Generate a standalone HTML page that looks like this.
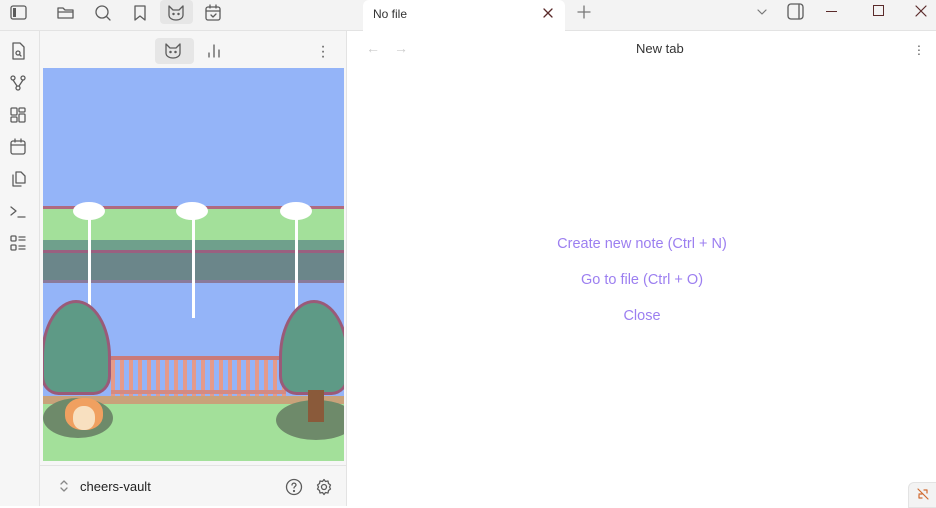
<!DOCTYPE html>
<html><head><style>
*{margin:0;padding:0;box-sizing:border-box}
body{width:936px;height:506px;overflow:hidden;font-family:"Liberation Sans",sans-serif;background:#fff;position:relative}
.a{position:absolute}
svg{position:absolute;fill:none;stroke:#5c5c5c;stroke-width:1.3;stroke-linecap:round;stroke-linejoin:round}
</style></head><body>
<div class="a" style="left:0;top:0;width:936px;height:31px;background:#f3f3f3;border-bottom:1px solid #e3e3e3"></div>
<div class="a" style="left:0;top:31px;width:40px;height:475px;background:#f6f6f6;border-right:1px solid #e3e3e3"></div>
<div class="a" style="left:40px;top:31px;width:307px;height:475px;background:#f6f6f6;border-right:1px solid #e3e3e3"></div>
<div class="a" style="left:40px;top:465px;width:307px;height:1px;background:#e3e3e3"></div>
<!-- top icons -->
<svg style="left:9px;top:3px" width="20" height="20" viewBox="0 0 20 20"><rect x="2" y="3" width="15" height="13" rx="2"/><rect x="4" y="5" width="3" height="9" fill="#5c5c5c" stroke="none"/></svg>
<svg style="left:56px;top:3px" width="20" height="20" viewBox="0 0 20 20"><path d="M2 5v10h15V7H9L7 5z M2 9h15"/></svg>
<svg style="left:93px;top:3px" width="20" height="20" viewBox="0 0 20 20"><circle cx="9" cy="9" r="6"/><path d="M13.5 13.5L17 17"/></svg>
<svg style="left:130px;top:3px" width="20" height="20" viewBox="0 0 20 20"><path d="M5 3h10v14l-5-4-5 4z"/></svg>
<div class="a" style="left:160px;top:0;width:33px;height:24px;background:#e6e6e6;border-radius:4px"></div>
<svg style="left:166px;top:3px" width="20" height="20" viewBox="0 0 20 20"><path d="M3 3l4 4h6l4-4v9c0 3-3 5-7 5s-7-2-7-5z"/><circle cx="7.5" cy="11" r=".6" fill="#5c5c5c"/><circle cx="12.5" cy="11" r=".6" fill="#5c5c5c"/></svg>
<svg style="left:203px;top:3px" width="20" height="20" viewBox="0 0 20 20"><rect x="3" y="4" width="14" height="13" rx="2"/><path d="M3 8h14M7 2v3M13 2v3M8 12l2 2 3-3"/></svg>
<!-- ribbon -->
<svg style="left:8px;top:41px" width="20" height="20" viewBox="0 0 20 20"><path d="M5 2h7l4 4v12H5z"/><circle cx="10" cy="12" r="2"/><path d="M11.5 13.5l1.5 1.5"/></svg>
<svg style="left:8px;top:73px" width="20" height="20" viewBox="0 0 20 20"><circle cx="5" cy="5" r="2"/><circle cx="15" cy="5" r="2"/><circle cx="10" cy="15" r="2"/><path d="M5 7l4 6M15 7l-4 6"/></svg>
<svg style="left:8px;top:105px" width="20" height="20" viewBox="0 0 20 20"><rect x="3" y="3" width="6" height="7" rx="1"/><rect x="11" y="3" width="6" height="4" rx="1"/><rect x="3" y="12" width="6" height="5" rx="1"/><rect x="11" y="9" width="6" height="8" rx="1"/></svg>
<svg style="left:8px;top:137px" width="20" height="20" viewBox="0 0 20 20"><rect x="3" y="4" width="14" height="13" rx="2"/><path d="M3 8h14M7 2v3M13 2v3"/></svg>
<svg style="left:8px;top:169px" width="20" height="20" viewBox="0 0 20 20"><path d="M8 3h5l4 4v7H8z M5 6v11h8"/></svg>
<svg style="left:8px;top:201px" width="20" height="20" viewBox="0 0 20 20"><path d="M3 6l5 4-5 4M10 16h7"/></svg>
<svg style="left:8px;top:233px" width="20" height="20" viewBox="0 0 20 20"><rect x="3" y="3" width="5" height="5" rx="1"/><rect x="3" y="12" width="5" height="5" rx="1"/><path d="M11 4h6M11 7h6M11 13h6M11 16h6"/></svg>
<!-- panel header -->
<div class="a" style="left:155px;top:38px;width:39px;height:26px;background:#e6e6e6;border-radius:4px"></div>
<svg style="left:163px;top:41px" width="20" height="20" viewBox="0 0 20 20"><path d="M3 3l4 4h6l4-4v9c0 3-3 5-7 5s-7-2-7-5z"/><circle cx="7.5" cy="11" r=".6" fill="#5c5c5c"/><circle cx="12.5" cy="11" r=".6" fill="#5c5c5c"/></svg>
<svg style="left:204px;top:41px" width="20" height="20" viewBox="0 0 20 20"><path d="M5 12v4M10 4v12M15 9v7"/></svg>
<div class="a" style="left:320px;top:44px;color:#5c5c5c;font-size:16px;line-height:5px;width:6px;text-align:center">·<br>·<br>·</div>
<!-- scene -->
<div class="a" style="left:43px;top:68px;width:301px;height:393px;background:#94b4f8;overflow:hidden">
 <div class="a" style="left:0;top:138px;width:301px;height:40px;background:#a3e09a;border-top:3px solid #b06a80"></div>
 <div class="a" style="left:0;top:172px;width:301px;height:12px;background:#6fa08c"></div>
 <div class="a" style="left:0;top:182px;width:301px;height:33px;background:#6b868a;border-top:3px solid #9a6080;border-bottom:3px solid #8a7a9a"></div>
 <div class="a" style="left:30px;top:134px;width:32px;height:18px;background:#fff;border-radius:50%"></div>
 <div class="a" style="left:45px;top:145px;width:3px;height:140px;background:#fff"></div>
 <div class="a" style="left:133px;top:134px;width:32px;height:18px;background:#fff;border-radius:50%"></div>
 <div class="a" style="left:149px;top:145px;width:3px;height:105px;background:#fff"></div>
 <div class="a" style="left:237px;top:134px;width:32px;height:18px;background:#fff;border-radius:50%"></div>
 <div class="a" style="left:252px;top:145px;width:3px;height:128px;background:#fff"></div>
 <div class="a" style="left:68px;top:288px;width:175px;height:4px;background:#c97a7a"></div>
 <div class="a" style="left:68px;top:292px;width:175px;height:40px;background:repeating-linear-gradient(90deg,#e59a8a 0 4px,#94b4f8 4px 9px)"></div>
 <div class="a" style="left:68px;top:322px;width:175px;height:4px;background:#d48a82"></div>
 <div class="a" style="left:0;top:328px;width:301px;height:10px;background:#c9a27a"></div>
 <div class="a" style="left:0;top:336px;width:301px;height:57px;background:#a3e09a"></div>
 <div class="a" style="left:0;top:330px;width:70px;height:40px;background:#6e8a6a;border-radius:50%"></div>
 <div class="a" style="left:233px;top:332px;width:80px;height:40px;background:#6e8a6a;border-radius:50%"></div>
 <div class="a" style="left:-2px;top:232px;width:70px;height:95px;background:#5e9a86;border:3px solid #9a5a78;border-radius:50% 50% 25% 25%/60% 60% 20% 20%"></div>
 <div class="a" style="left:236px;top:232px;width:70px;height:95px;background:#5e9a86;border:3px solid #9a5a78;border-radius:50% 50% 25% 25%/60% 60% 20% 20%"></div>
 <div class="a" style="left:265px;top:322px;width:16px;height:32px;background:#8a5a3a"></div>
 <div class="a" style="left:22px;top:330px;width:38px;height:32px;background:#f0a060;border-radius:45%"></div>
 <div class="a" style="left:30px;top:338px;width:22px;height:24px;background:#f8e0c0;border-radius:45%"></div>
</div>
<!-- footer -->
<svg style="left:57px;top:478px" width="14" height="16" viewBox="0 0 14 16"><path d="M4 6l3-3 3 3M4 10l3 3 3-3" stroke="#888"/></svg>
<div class="a" style="left:80px;top:479px;font-size:13px;color:#222">cheers-vault</div>
<svg style="left:284px;top:477px" width="20" height="20" viewBox="0 0 20 20"><circle cx="10" cy="10" r="7.5"/><path d="M8 8c0-2.5 4-2.5 4 0 0 1.5-2 1.5-2 3"/><circle cx="10" cy="14" r=".5"/></svg>
<svg style="left:314px;top:477px" width="20" height="20" viewBox="0 0 20 20"><circle cx="10" cy="10" r="2.5"/><path d="M10 2.5l1.5 2 2.5-.5.5 2.5 2 1.5-1 2 1 2-2 1.5-.5 2.5-2.5-.5-1.5 2-1.5-2-2.5.5-.5-2.5-2-1.5 1-2-1-2 2-1.5.5-2.5 2.5.5z"/></svg>
<!-- tabs -->
<div class="a" style="left:363px;top:0;width:202px;height:31px;background:#fff;border-radius:6px 6px 0 0"></div>
<div class="a" style="left:373px;top:7px;font-size:12px;color:#333">No file</div>
<svg style="left:541px;top:6px" width="14" height="14" viewBox="0 0 14 14"><path d="M3 3l8 8M11 3l-8 8" stroke="#5a2a2a"/></svg>
<svg style="left:576px;top:4px" width="16" height="16" viewBox="0 0 16 16"><path d="M8 2v12M2 8h12" stroke="#777"/></svg>
<svg style="left:755px;top:5px" width="14" height="14" viewBox="0 0 14 14"><path d="M3 5l4 4 4-4" stroke="#777" stroke-width="1.2"/></svg>
<svg style="left:786px;top:2px" width="20" height="20" viewBox="0 0 20 20"><rect x="2" y="2" width="15" height="15" rx="3"/><path d="M13 3v13"/></svg>
<div class="a" style="left:826px;top:11px;width:11px;height:1px;background:#5a2a2a"></div>
<div class="a" style="left:873px;top:5px;width:11px;height:11px;border:1px solid #5a2a2a"></div>
<svg style="left:914px;top:4px" width="14" height="14" viewBox="0 0 14 14"><path d="M2 2l10 10M12 2l-10 10" stroke="#5a2a2a" stroke-width="1.2"/></svg>
<!-- nav -->
<div class="a" style="left:366px;top:40px;font-size:14px;color:#ccc">←</div>
<div class="a" style="left:394px;top:40px;font-size:14px;color:#ccc">→</div>
<div class="a" style="left:636px;top:41px;font-size:13px;color:#333">New tab</div>
<div class="a" style="left:916px;top:43px;color:#5c5c5c;font-size:14px;line-height:4px;width:6px;text-align:center">·<br>·<br>·</div>
<div class="a" style="left:348px;top:226px;width:596px;text-align:center;font-size:14.5px;color:#9c7ff0;line-height:36px;padding-right:8px">Create new note (Ctrl + N)<br>Go to file (Ctrl + O)<br>Close</div>
<div class="a" style="left:908px;top:482px;width:30px;height:26px;background:#f3f3f3;border:1px solid #e3e3e3;border-radius:6px 0 0 0"></div>
<svg style="left:916px;top:487px" width="14" height="14" viewBox="0 0 14 14"><path d="M2 2l10 10M3 7h3M8 3h3v3M6 11H3V8" stroke="#d06a30" stroke-width="1.2"/></svg>
</body></html>
